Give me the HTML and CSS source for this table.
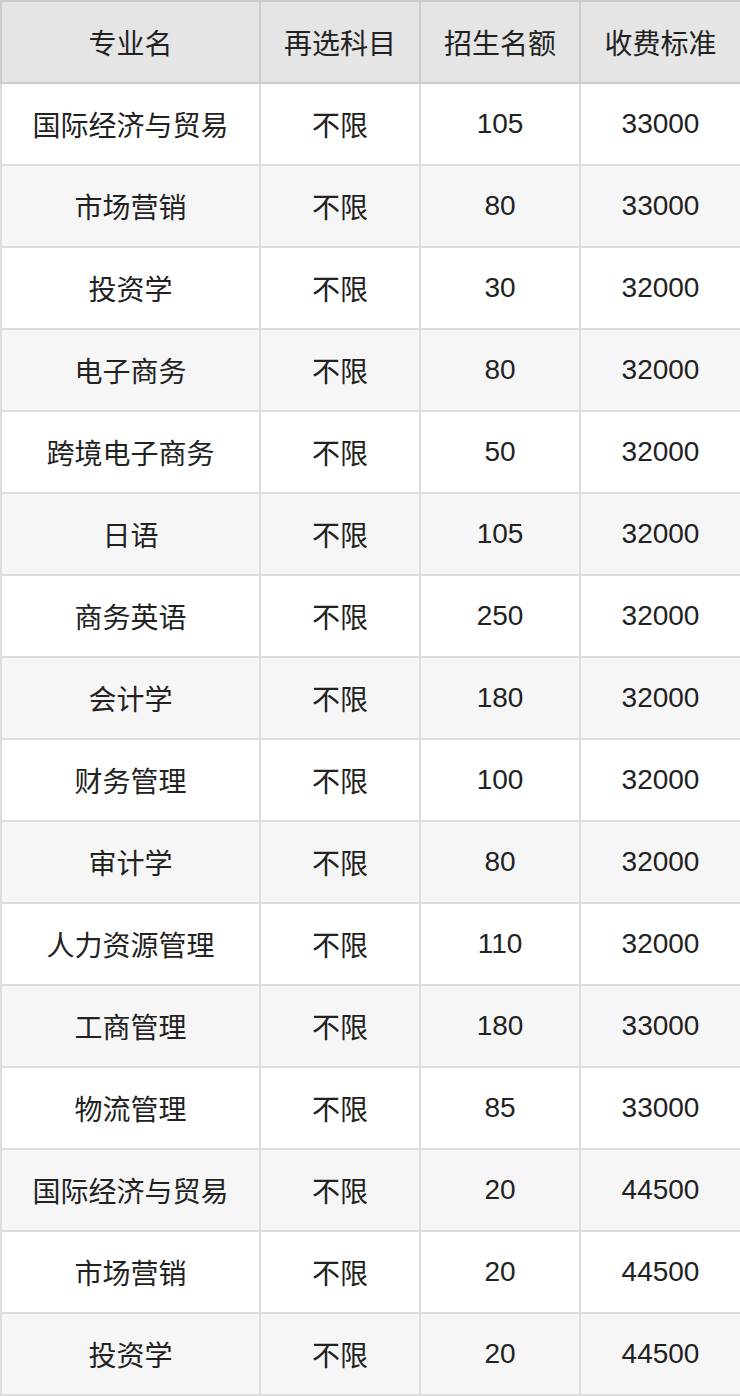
FILE: index.html
```html
<!DOCTYPE html>
<html lang="zh-CN">
<head>
<meta charset="utf-8">
<link rel="stylesheet" href="styles.css">
</head>
<body>
<table class="tbl">
<colgroup><col class="c1"><col class="c2"><col class="c3"><col class="c4"></colgroup>
<thead>
<tr><th>专业名</th><th>再选科目</th><th>招生名额</th><th>收费标准</th></tr>
</thead>
<tbody>
<tr><td>国际经济与贸易</td><td>不限</td><td>105</td><td>33000</td></tr>
<tr><td>市场营销</td><td>不限</td><td>80</td><td>33000</td></tr>
<tr><td>投资学</td><td>不限</td><td>30</td><td>32000</td></tr>
<tr><td>电子商务</td><td>不限</td><td>80</td><td>32000</td></tr>
<tr><td>跨境电子商务</td><td>不限</td><td>50</td><td>32000</td></tr>
<tr><td>日语</td><td>不限</td><td>105</td><td>32000</td></tr>
<tr><td>商务英语</td><td>不限</td><td>250</td><td>32000</td></tr>
<tr><td>会计学</td><td>不限</td><td>180</td><td>32000</td></tr>
<tr><td>财务管理</td><td>不限</td><td>100</td><td>32000</td></tr>
<tr><td>审计学</td><td>不限</td><td>80</td><td>32000</td></tr>
<tr><td>人力资源管理</td><td>不限</td><td>110</td><td>32000</td></tr>
<tr><td>工商管理</td><td>不限</td><td>180</td><td>33000</td></tr>
<tr><td>物流管理</td><td>不限</td><td>85</td><td>33000</td></tr>
<tr><td>国际经济与贸易</td><td>不限</td><td>20</td><td>44500</td></tr>
<tr><td>市场营销</td><td>不限</td><td>20</td><td>44500</td></tr>
<tr><td>投资学</td><td>不限</td><td>20</td><td>44500</td></tr>
</tbody>
</table>
</body>
</html>
```
FILE: styles.css
```css
html, body {
  margin: 0;
  padding: 0;
  background: #ffffff;
}
.tbl {
  width: 740px;
  border-collapse: collapse;
  table-layout: fixed;
  font-family: "Liberation Sans", "Noto Sans CJK SC", sans-serif;
  font-size: 28px;
  color: #222222;
}
.c1 { width: 259px; }
.c2 { width: 160px; }
.c3 { width: 160px; }
.c4 { width: 161px; }
.tbl th, .tbl td {
  height: 80px;
  padding: 0;
  text-align: center;
  vertical-align: middle;
  border: 2px solid #dddddd;
  font-weight: normal;
}
.tbl th {
  background: #e5e5e5;
  border-color: #cccccc;
}
.tbl tbody tr:nth-child(even) td {
  background: #f6f6f6;
}
```
